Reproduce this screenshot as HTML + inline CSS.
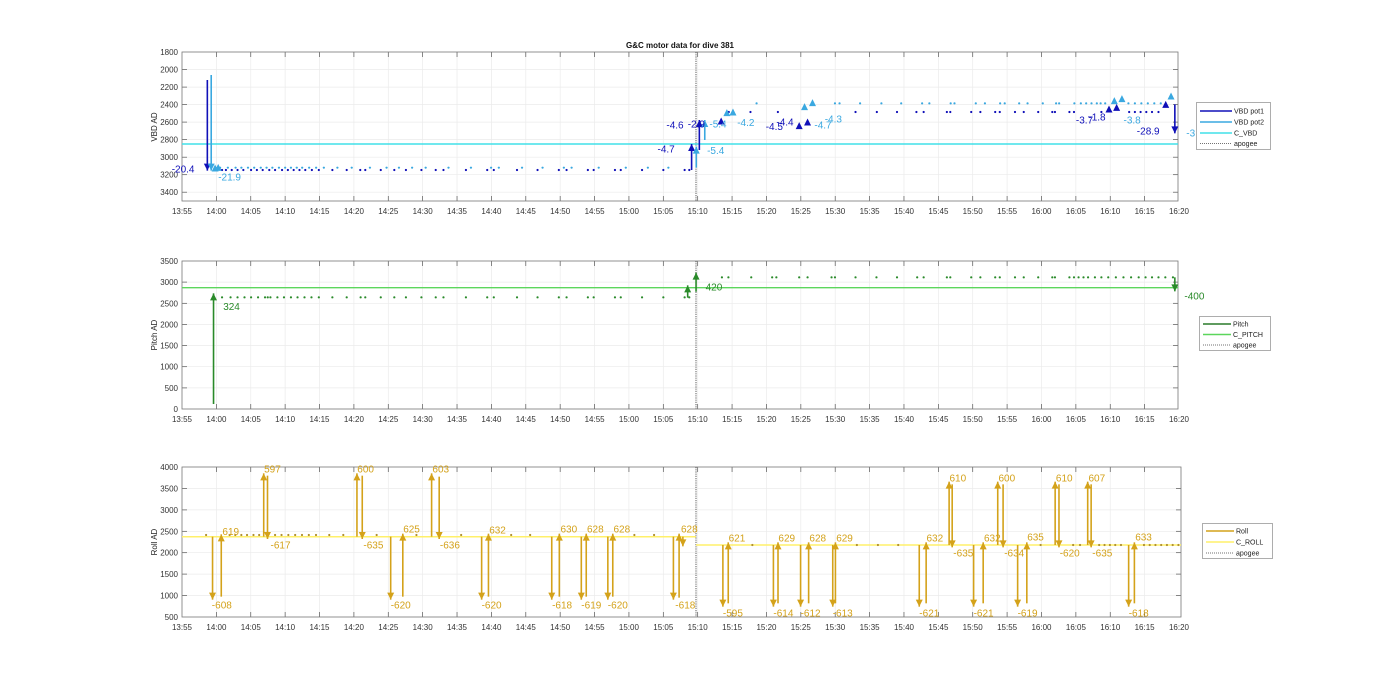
<!DOCTYPE html>
<html><head><meta charset="utf-8"><style>
html,body{margin:0;padding:0;background:#fff;width:1400px;height:693px;overflow:hidden}
svg{display:block;font-family:"Liberation Sans",sans-serif}
.tk{font-size:8px;fill:#333;text-anchor:middle}
.yt{font-size:8px;fill:#333;text-anchor:end}
.lg{font-size:7px;fill:#222}
.d1{fill:#1010b8;font-size:10px}
.d2{fill:#3aa8e0;font-size:10px}
.g{fill:#2a8a2a;font-size:10px}
.r{fill:#d4a21a;font-size:10px}
</style></head><body>
<svg id="s" width="1400" height="693" viewBox="0 0 1400 693">
<g id="grid"></g>
<text x="680" y="48" style="font-size:8px;font-weight:bold;text-anchor:middle;fill:#111">G&amp;C motor data for dive 381</text>
<text transform="translate(157,127) rotate(-90)" style="font-size:8px;text-anchor:middle;fill:#222">VBD AD</text>
<text transform="translate(157,335) rotate(-90)" style="font-size:8px;text-anchor:middle;fill:#222">Pitch AD</text>
<text transform="translate(157,542) rotate(-90)" style="font-size:8px;text-anchor:middle;fill:#222">Roll AD</text>
<g class="yt">
<text class="yt" x="178" y="55">1800</text><text class="yt" x="178" y="72.5">2000</text><text class="yt" x="178" y="90">2200</text><text class="yt" x="178" y="107.6">2400</text><text class="yt" x="178" y="125.1">2600</text><text class="yt" x="178" y="142.6">2800</text><text class="yt" x="178" y="160.2">3000</text><text class="yt" x="178" y="177.7">3200</text><text class="yt" x="178" y="195.2">3400</text>
<text class="yt" x="178" y="264">3500</text><text class="yt" x="178" y="285.1">3000</text><text class="yt" x="178" y="306.3">2500</text><text class="yt" x="178" y="327.4">2000</text><text class="yt" x="178" y="348.6">1500</text><text class="yt" x="178" y="369.7">1000</text><text class="yt" x="178" y="390.9">500</text><text class="yt" x="178" y="412">0</text>
<text class="yt" x="178" y="470">4000</text><text class="yt" x="178" y="491.4">3500</text><text class="yt" x="178" y="512.9">3000</text><text class="yt" x="178" y="534.3">2500</text><text class="yt" x="178" y="555.7">2000</text><text class="yt" x="178" y="577.1">1500</text><text class="yt" x="178" y="598.6">1000</text><text class="yt" x="178" y="620">500</text>
</g>
<g transform="translate(0,214)"><text class="tk" x="182">13:55</text><text class="tk" x="216.4">14:00</text><text class="tk" x="250.8">14:05</text><text class="tk" x="285.1">14:10</text><text class="tk" x="319.5">14:15</text><text class="tk" x="353.9">14:20</text><text class="tk" x="388.3">14:25</text><text class="tk" x="422.7">14:30</text><text class="tk" x="457">14:35</text><text class="tk" x="491.4">14:40</text><text class="tk" x="525.8">14:45</text><text class="tk" x="560.2">14:50</text><text class="tk" x="594.6">14:55</text><text class="tk" x="628.9">15:00</text><text class="tk" x="663.3">15:05</text><text class="tk" x="697.7">15:10</text><text class="tk" x="732.1">15:15</text><text class="tk" x="766.5">15:20</text><text class="tk" x="800.8">15:25</text><text class="tk" x="835.2">15:30</text><text class="tk" x="869.6">15:35</text><text class="tk" x="904">15:40</text><text class="tk" x="938.4">15:45</text><text class="tk" x="972.7">15:50</text><text class="tk" x="1007.1">15:55</text><text class="tk" x="1041.5">16:00</text><text class="tk" x="1075.9">16:05</text><text class="tk" x="1110.3">16:10</text><text class="tk" x="1144.6">16:15</text><text class="tk" x="1179">16:20</text></g>
<g transform="translate(0,422)"><text class="tk" x="182">13:55</text><text class="tk" x="216.4">14:00</text><text class="tk" x="250.8">14:05</text><text class="tk" x="285.1">14:10</text><text class="tk" x="319.5">14:15</text><text class="tk" x="353.9">14:20</text><text class="tk" x="388.3">14:25</text><text class="tk" x="422.7">14:30</text><text class="tk" x="457">14:35</text><text class="tk" x="491.4">14:40</text><text class="tk" x="525.8">14:45</text><text class="tk" x="560.2">14:50</text><text class="tk" x="594.6">14:55</text><text class="tk" x="628.9">15:00</text><text class="tk" x="663.3">15:05</text><text class="tk" x="697.7">15:10</text><text class="tk" x="732.1">15:15</text><text class="tk" x="766.5">15:20</text><text class="tk" x="800.8">15:25</text><text class="tk" x="835.2">15:30</text><text class="tk" x="869.6">15:35</text><text class="tk" x="904">15:40</text><text class="tk" x="938.4">15:45</text><text class="tk" x="972.7">15:50</text><text class="tk" x="1007.1">15:55</text><text class="tk" x="1041.5">16:00</text><text class="tk" x="1075.9">16:05</text><text class="tk" x="1110.3">16:10</text><text class="tk" x="1144.6">16:15</text><text class="tk" x="1179">16:20</text></g>
<g transform="translate(0,630)"><text class="tk" x="182">13:55</text><text class="tk" x="216.4">14:00</text><text class="tk" x="250.8">14:05</text><text class="tk" x="285.1">14:10</text><text class="tk" x="319.5">14:15</text><text class="tk" x="353.9">14:20</text><text class="tk" x="388.3">14:25</text><text class="tk" x="422.7">14:30</text><text class="tk" x="457">14:35</text><text class="tk" x="491.4">14:40</text><text class="tk" x="525.8">14:45</text><text class="tk" x="560.2">14:50</text><text class="tk" x="594.6">14:55</text><text class="tk" x="628.9">15:00</text><text class="tk" x="663.3">15:05</text><text class="tk" x="697.7">15:10</text><text class="tk" x="732.1">15:15</text><text class="tk" x="766.5">15:20</text><text class="tk" x="800.8">15:25</text><text class="tk" x="835.2">15:30</text><text class="tk" x="869.6">15:35</text><text class="tk" x="904">15:40</text><text class="tk" x="938.4">15:45</text><text class="tk" x="972.7">15:50</text><text class="tk" x="1007.1">15:55</text><text class="tk" x="1041.5">16:00</text><text class="tk" x="1075.9">16:05</text><text class="tk" x="1110.3">16:10</text><text class="tk" x="1144.6">16:15</text><text class="tk" x="1179">16:20</text></g>
<g id="data"></g>
<g id="labs">
<text class="d1 z1" data-x="85" data-y="398">-20.4</text>
<text class="d2 z1" data-x="205" data-y="422">-21.9</text>
<text class="d1 z1" data-x="1340" data-y="338">-4.7</text>
<text class="d2 z1" data-x="1468" data-y="342">-5.4</text>
<text class="d1 z1" data-x="1363" data-y="265">-4.6</text>
<text class="d1 z2" data-x="125" data-y="262">-2.9</text>
<text class="d2 z2" data-x="182" data-y="262">-5.4</text>
<text class="d2 z2" data-x="255" data-y="258">-4.2</text>
<text class="d1 z2" data-x="330" data-y="270">-4.5</text>
<text class="d1 z2" data-x="358" data-y="257">-4.4</text>
<text class="d2 z2" data-x="458" data-y="265">-4.7</text>
<text class="d2 z2" data-x="485" data-y="247">-4.3</text>
<text class="d1 z2" data-x="1145" data-y="250">-3.7</text>
<text class="d1 z2" data-x="1178" data-y="241">-1.8</text>
<text class="d2 z2" data-x="1270" data-y="250">-3.8</text>
<text class="d1 z2" data-x="1305" data-y="284">-28.9</text>
<text class="d2 z2" data-x="1435" data-y="290">-3</text>
<text class="g z6" data-x="218" data-y="180">324</text>
<text class="g z7" data-x="172" data-y="122">420</text>
<text class="g z7" data-x="1430" data-y="148">-400</text>
<text class="r z3" data-x="218" data-y="240">619</text><text class="r z3" data-x="190" data-y="460">-608</text>
<text class="r z3" data-x="328" data-y="52">597</text><text class="r z3" data-x="345" data-y="280">-617</text>
<text class="r z3" data-x="574" data-y="52">600</text><text class="r z3" data-x="590" data-y="280">-635</text>
<text class="r z3" data-x="772" data-y="52">603</text><text class="r z3" data-x="792" data-y="280">-636</text>
<text class="r z3" data-x="695" data-y="232">625</text><text class="r z3" data-x="662" data-y="460">-620</text>
<text class="r z3" data-x="922" data-y="235">632</text><text class="r z3" data-x="902" data-y="460">-620</text>
<text class="r z3" data-x="1110" data-y="232">630</text><text class="r z3" data-x="1088" data-y="460">-618</text>
<text class="r z3" data-x="1180" data-y="232">628</text><text class="r z3" data-x="1165" data-y="460">-619</text>
<text class="r z3" data-x="1250" data-y="232">628</text><text class="r z3" data-x="1235" data-y="460">-620</text>
<text class="r z3" data-x="1428" data-y="232">628</text><text class="r z3" data-x="1413" data-y="460">-618</text>
<text class="r z5" data-x="105" data-y="260">621</text><text class="r z5" data-x="90" data-y="484">-595</text>
<text class="r z5" data-x="235" data-y="260">629</text><text class="r z5" data-x="222" data-y="484">-614</text>
<text class="r z5" data-x="316" data-y="260">628</text><text class="r z5" data-x="293" data-y="484">-612</text>
<text class="r z5" data-x="386" data-y="260">629</text><text class="r z5" data-x="377" data-y="484">-613</text>
<text class="r z5" data-x="622" data-y="260">632</text><text class="r z5" data-x="603" data-y="484">-621</text>
<text class="r z5" data-x="682" data-y="80">610</text><text class="r z5" data-x="692" data-y="304">-635</text>
<text class="r z5" data-x="772" data-y="260">632</text><text class="r z5" data-x="745" data-y="484">-621</text>
<text class="r z5" data-x="810" data-y="80">600</text><text class="r z5" data-x="825" data-y="304">-634</text>
<text class="r z5" data-x="885" data-y="256">635</text><text class="r z5" data-x="860" data-y="484">-619</text>
<text class="r z5" data-x="960" data-y="80">610</text><text class="r z5" data-x="970" data-y="304">-620</text>
<text class="r z5" data-x="1045" data-y="80">607</text><text class="r z5" data-x="1055" data-y="304">-635</text>
<text class="r z5" data-x="1167" data-y="256">633</text><text class="r z5" data-x="1150" data-y="484">-618</text>
</g>
<rect x="1196.5" y="102.5" width="74" height="47" fill="#fff" stroke="#999" stroke-width="0.8"/>
<line x1="1200" y1="111" x2="1232" y2="111" stroke="#1010b8" stroke-width="1.6"/><text class="lg" x="1234" y="113.5">VBD pot1</text>
<line x1="1200" y1="122" x2="1232" y2="122" stroke="#3aa8e0" stroke-width="1.6"/><text class="lg" x="1234" y="124.5">VBD pot2</text>
<line x1="1200" y1="133" x2="1232" y2="133" stroke="#40e0e8" stroke-width="1.6"/><text class="lg" x="1234" y="135.5">C_VBD</text>
<line x1="1200" y1="143.5" x2="1232" y2="143.5" stroke="#444" stroke-width="0.8" stroke-dasharray="1,1"/><text class="lg" x="1234" y="146">apogee</text>
<rect x="1199.5" y="316.5" width="71" height="34" fill="#fff" stroke="#999" stroke-width="0.8"/>
<line x1="1203" y1="324" x2="1231" y2="324" stroke="#2a7a2a" stroke-width="1.6"/><text class="lg" x="1233" y="326.5">Pitch</text>
<line x1="1203" y1="334.5" x2="1231" y2="334.5" stroke="#5cd65c" stroke-width="1.6"/><text class="lg" x="1233" y="337">C_PITCH</text>
<line x1="1203" y1="345" x2="1231" y2="345" stroke="#444" stroke-width="0.8" stroke-dasharray="1,1"/><text class="lg" x="1233" y="347.5">apogee</text>
<rect x="1202.5" y="523.5" width="70" height="35" fill="#fff" stroke="#999" stroke-width="0.8"/>
<line x1="1206" y1="531" x2="1234" y2="531" stroke="#d4a21a" stroke-width="1.6"/><text class="lg" x="1236" y="533.5">Roll</text>
<line x1="1206" y1="542" x2="1234" y2="542" stroke="#fff06a" stroke-width="1.6"/><text class="lg" x="1236" y="544.5">C_ROLL</text>
<line x1="1206" y1="553" x2="1234" y2="553" stroke="#444" stroke-width="0.8" stroke-dasharray="1,1"/><text class="lg" x="1236" y="555.5">apogee</text>
</svg>
<script>
(function(){
var NS="http://www.w3.org/2000/svg";
var G=document.getElementById('grid'),D=document.getElementById('data');
function el(p,t,a){var e=document.createElementNS(NS,t);for(var k in a)e.setAttribute(k,a[k]);p.appendChild(e);return e;}
var X0=182,X1=1179,dx=(X1-X0)/29;
var M={
z1:[function(X){return 184.5+(X-118)*0.3871},40],
z2:[function(X){return 663.7+(X-62)*0.3806},40],
z3:[function(X){return 184.5+(X-118)*0.379},455],
z5:[function(X){return 698+(X-25)*0.3828},455],
z6:[function(X){return 184.5+(X-118)*0.3871},250],
z7:[function(X){return 663.7+(X-62)*0.3806},250]};
function fx(z,X){return M[z][0](X)} function fy(z,Y){return M[z][1]+Y/3}
var panels=[[52,201,1178,[69.5,87.1,104.6,122.1,139.6,157.2,174.7,192.2]],[261,409,1178,[282.1,303.3,324.4,345.6,366.7,387.9]],[467,617,1181,[488.4,509.9,531.3,552.7,574.1,595.6]]];
panels.forEach(function(p){
 for(var i=1;i<29;i++){var x=X0+i*dx;el(G,'line',{x1:x,y1:p[0],x2:x,y2:p[1],stroke:'#ebebeb','stroke-width':0.7});
  el(G,'line',{x1:x,y1:p[1],x2:x,y2:p[1]-5,stroke:'#555','stroke-width':0.7});el(G,'line',{x1:x,y1:p[0],x2:x,y2:p[0]+5,stroke:'#555','stroke-width':0.7});}
 p[3].forEach(function(y){el(G,'line',{x1:X0,y1:y,x2:p[2],y2:y,stroke:'#ebebeb','stroke-width':0.7});
  el(G,'line',{x1:X0,y1:y,x2:X0+5,y2:y,stroke:'#555','stroke-width':0.7});el(G,'line',{x1:p[2],y1:y,x2:p[2]-5,y2:y,stroke:'#555','stroke-width':0.7});});
 el(G,'rect',{x:X0,y:p[0],width:p[2]-X0,height:p[1]-p[0],fill:'none',stroke:'#777','stroke-width':0.8});
 el(D,'line',{x1:696,y1:p[0],x2:696,y2:p[1],stroke:'#333','stroke-width':0.8,'stroke-dasharray':'1.2,1'});
});
function arrow(x,y0,y1,c,w){el(D,'line',{x1:x,y1:y0,x2:x,y2:y1,stroke:c,'stroke-width':w||1.6});
 var s=y1<y0?1:-1;el(D,'path',{d:'M'+(x-3.5)+' '+(y1+s*7)+'L'+(x+3.5)+' '+(y1+s*7)+'L'+x+' '+y1+'Z',fill:c});}
function tri(x,y,c){el(D,'path',{d:'M'+(x-3.5)+' '+(y+3.5)+'L'+(x+3.5)+' '+(y+3.5)+'L'+x+' '+(y-3.5)+'Z',fill:c});}
function dot(x,y,c){el(D,'circle',{cx:x,cy:y,r:1.1,fill:c});}
var DB='#1010b8',LB='#3aa8e0',GR='#2a8a2a',RO='#d4a21a';
el(D,'line',{x1:182,y1:144,x2:1178,y2:144,stroke:'#40e0e8','stroke-width':1.4});
[215,225,240,255,270,290,305,320,337,352,370,385,400,415,430,447,465,500,537,572,585,625,660,690,730,767,787,845,900,917,977,1030,1085,1105,1160,1175,1230,1245,1300,1355,1410,1422].forEach(function(X){dot(fx('z1',X),fy('z1',390),DB)});
[210,230,250,265,282,298,315,330,345,362,378,393,408,422,440,458,478,513,550,597,640,672,706,741,800,858,910,930,990,1043,1098,1118,1188,1258,1315,1368].forEach(function(X){dot(fx('z1',X),fy('z1',383),LB)});
arrow(fx('z1',177),fy('z1',120),fy('z1',392),DB);
arrow(fx('z1',187),fy('z1',105),fy('z1',392),LB);
tri(fx('z1',197),fy('z1',384),LB);tri(fx('z1',205),fy('z1',382),LB);
arrow(fx('z1',1428),fy('z1',390),fy('z1',312),DB);
arrow(fx('z1',1440),fy('z1',383),fy('z1',320),LB);
arrow(fx('z1',1448),fy('z1',330),fy('z1',240),DB);
arrow(fx('z1',1462),fy('z1',300),fy('z1',240),LB);
[233,290,362,566,622,675,726,745,806,815,870,894,933,945,985,1008,1046,1083,1090,1128,1140,1212,1285,1300,1315,1330,1345,1362].forEach(function(X){dot(fx('z2',X),fy('z2',216),DB)});
[306,512,524,578,634,686,741,760,816,826,882,906,946,958,996,1018,1058,1093,1101,1141,1158,1172,1186,1200,1210,1222,1283,1300,1317,1334,1351,1368].forEach(function(X){dot(fx('z2',X),fy('z2',190),LB)});
[[228,218],[244,216],[432,200],[453,188],[1246,182],[1266,176],[1395,168]].forEach(function(p){tri(fx('z2',p[0]),fy('z2',p[1]),LB)});
[[213,243],[418,257],[440,246],[1232,207],[1252,202],[1381,193]].forEach(function(p){tri(fx('z2',p[0]),fy('z2',p[1]),DB)});
arrow(fx('z2',1405),fy('z2',193),fy('z2',280),DB);
el(D,'line',{x1:182,y1:287.7,x2:1178,y2:287.7,stroke:'#5cd65c','stroke-width':1.4});
[215,237,255,273,290,308,326,333,340,358,375,393,410,428,446,465,500,537,573,585,625,660,690,730,767,787,845,900,917,977,1030,1085,1105,1160,1175,1230,1245,1300,1355,1410,1422].forEach(function(X){dot(fx('z6',X),fy('z6',142),GR)});
[215,232,292,347,358,418,440,503,512,566,621,675,728,745,806,815,870,894,933,945,985,1008,1046,1083,1090,1128,1140,1152,1165,1177,1195,1212,1230,1250,1270,1290,1310,1328,1345,1362,1380,1400].forEach(function(X){dot(fx('z7',X),fy('z7',82),GR)});
arrow(fx('z6',193),fy('z6',462),fy('z6',130),GR);
arrow(fx('z7',125),fy('z7',143),fy('z7',106),GR);
arrow(fx('z7',147),fy('z7',125),fy('z7',68),GR);
arrow(fx('z7',1405),fy('z7',82),fy('z7',124),GR);
el(D,'line',{x1:182,y1:536.7,x2:696,y2:536.7,stroke:'#fff06a','stroke-width':1.5});
el(D,'line',{x1:696,y1:545,x2:1181,y2:545,stroke:'#fff06a','stroke-width':1.5});
[175,237,252,268,283,300,315,357,374,392,410,428,446,465,500,537,625,730,848,980,1030,1305,1357].forEach(function(X){dot(fx('z3',X),fy('z3',240),'#b09030')});
[167,440,495,548,920,1005,1023,1073,1087,1101,1115,1130,1190,1205,1220,1235,1250,1265,1280].forEach(function(X){dot(fx('z5',X),fy('z5',270),'#b09030')});
[[192,245,434],[215,425,238],[327,245,55],[337,62,252],[573,245,55],[587,62,252],[770,245,55],[790,65,252],[662,245,434],[694,425,236],[902,245,434],[920,425,236],[1087,245,434],[1107,425,236],[1165,245,434],[1178,425,236],[1235,245,434],[1248,425,236],[1408,245,434],[1423,428,236],[1433,245,274]].forEach(function(a){arrow(fx('z3',a[0]),fy('z3',a[1]),fy('z3',a[2]),RO)});
[[90,270,455],[104,445,262],[222,270,455],[234,445,262],[293,270,455],[314,445,262],[377,270,455],[384,445,262],[603,270,455],[621,445,262],[681,270,80],[689,88,277],[745,270,455],[770,445,262],[808,270,80],[822,88,277],[860,270,455],[884,445,262],[958,270,80],[968,88,277],[1043,270,80],[1052,88,277],[1150,270,455],[1165,445,262]].forEach(function(a){arrow(fx('z5',a[0]),fy('z5',a[1]),fy('z5',a[2]),RO)});
var L=document.querySelectorAll('#labs text');
for(var i=0;i<L.length;i++){var t=L[i],z=t.getAttribute('class').split(' ')[1];
 t.setAttribute('x',fx(z,+t.getAttribute('data-x')).toFixed(1));t.setAttribute('y',fy(z,+t.getAttribute('data-y')).toFixed(1));}
})();
</script>
</body></html>
